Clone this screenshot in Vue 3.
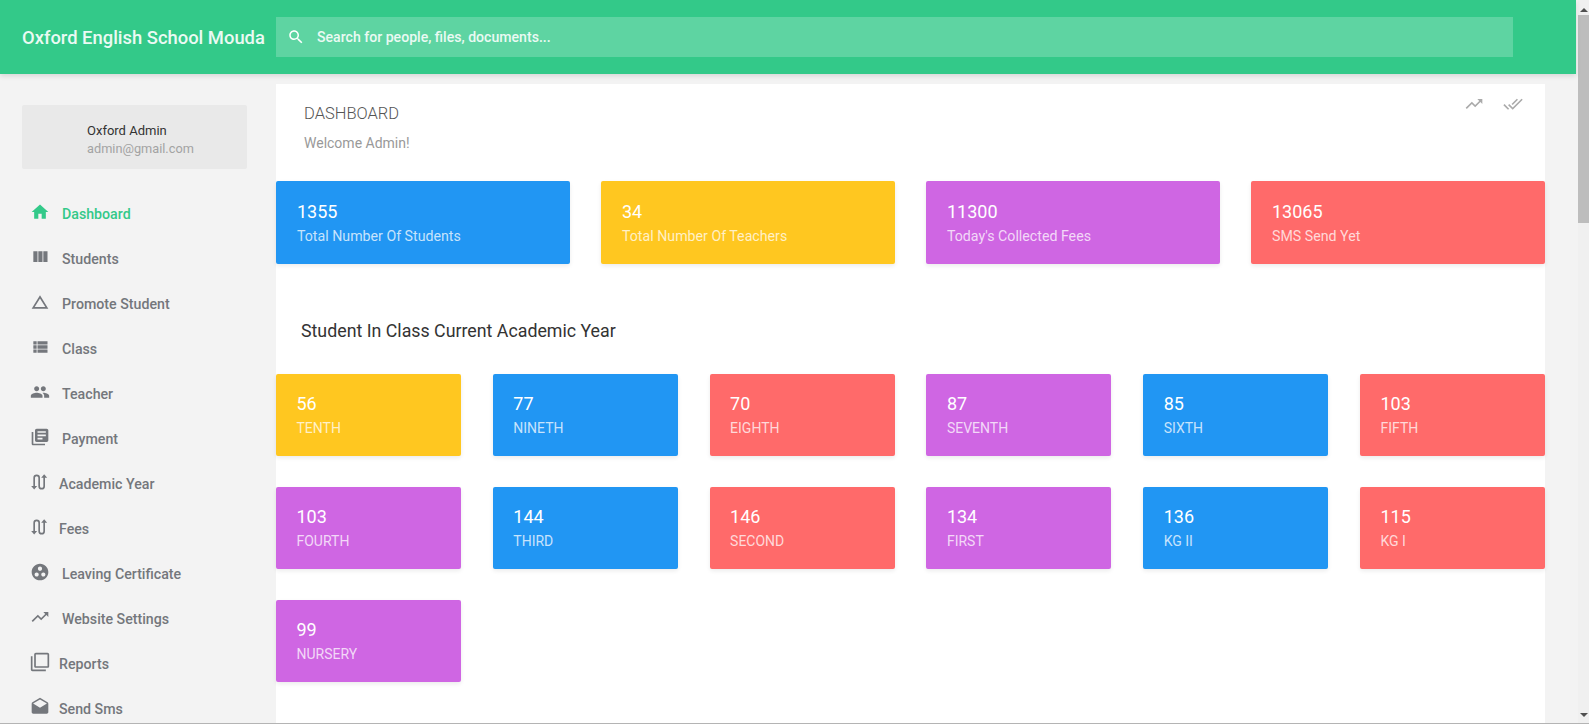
<script setup>
const paths = {
  home: 'M10 20v-6h4v6h5v-8h3L12 3 2 12h3v8z',
  column: 'M10 18h5V5h-5v13zm-6 0h5V5H4v13zM16 5v13h5V5h-5z',
  triangle: 'M12 7.77L18.39 18H5.61L12 7.77M12 4L2 20h20L12 4z',
  list: 'M4 14h4v-4H4v4zm0 5h4v-4H4v4zM4 9h4V5H4v4zm5 5h12v-4H9v4zm0 5h12v-4H9v4zM9 5v4h12V5H9z',
  people: 'M16 11c1.66 0 2.99-1.34 2.99-3S17.66 5 16 5c-1.66 0-3 1.34-3 3s1.34 3 3 3zm-8 0c1.66 0 2.99-1.34 2.99-3S9.66 5 8 5C6.34 5 5 6.34 5 8s1.34 3 3 3zm0 2c-2.33 0-7 1.17-7 3.5V19h14v-2.5c0-2.33-4.67-3.5-7-3.5zm8 0c-.29 0-.62.02-.97.05 1.16.84 1.97 1.97 1.97 3.45V19h6v-2.5c0-2.33-4.67-3.5-7-3.5z',
  books: 'M4 6H2v14c0 1.1.9 2 2 2h14v-2H4V6zm16-4H8c-1.1 0-2 .9-2 2v12c0 1.1.9 2 2 2h12c1.1 0 2-.9 2-2V4c0-1.1-.9-2-2-2zm-1 9H9V9h10v2zm-4 4H9v-2h6v2zm4-8H9V5h10v2z',
  swap: 'M5 21l-3.6-4.2H4V7a4 4 0 0 1 8 0v10a2 2 0 0 0 4 0V7h-2.6L17 2.8 20.6 7H18v10a4 4 0 0 1-8 0V7a2 2 0 0 0-4 0v9.8h2.6z',
  group: 'M12 2C6.48 2 2 6.48 2 12s4.48 10 10 10 10-4.48 10-10S17.52 2 12 2zM8 17.5c-1.38 0-2.5-1.12-2.5-2.5s1.12-2.5 2.5-2.5 2.5 1.12 2.5 2.5-1.12 2.5-2.5 2.5zM9.5 8c0-1.38 1.12-2.5 2.5-2.5s2.5 1.12 2.5 2.5-1.12 2.5-2.5 2.5S9.5 9.38 9.5 8zm6.5 9.5c-1.38 0-2.5-1.12-2.5-2.5s1.12-2.5 2.5-2.5 2.5 1.12 2.5 2.5-1.12 2.5-2.5 2.5z',
  trend: 'M16 6l2.29 2.29-4.88 4.88-4-4L2 16.59 3.41 18l6-6 4 4 6.3-6.29L22 12V6z',
  copy: 'M3 5H1v16c0 1.1.9 2 2 2h16v-2H3V5zm18-4H7c-1.1 0-2 .9-2 2v14c0 1.1.9 2 2 2h14c1.1 0 2-.9 2-2V3c0-1.1-.9-2-2-2zm0 16H7V3h14v14z',
  drafts: 'M21.99 8c0-.72-.37-1.35-.94-1.7L12 1 2.95 6.3C2.38 6.65 2 7.28 2 8v10c0 1.1.9 2 2 2h16c1.1 0 2-.9 2-2l-.01-10zM12 13L3.74 7.84 12 3l8.26 4.84L12 13z',
  doneAll: 'M18 7l-1.41-1.41-6.34 6.34 1.41 1.41L18 7zm4.24-1.41L11.66 16.17 7.48 12l-1.41 1.41L11.66 19l12-12-1.42-1.41zM.41 13.41L6 19l1.41-1.41L1.83 12 .41 13.41z',
  search: 'M15.5 14h-.79l-.28-.27C15.41 12.59 16 11.11 16 9.5 16 5.91 13.09 3 9.5 3S3 5.91 3 9.5 5.91 16 9.5 16c1.61 0 3.09-.59 4.23-1.57l.27.28v.79l5 4.99L20.49 19l-4.99-5zm-6 0C7.01 14 5 11.99 5 9.5S7.01 5 9.5 5 14 7.01 14 9.5 11.99 14 9.5 14z',
};

const menu = [
  { label: 'Dashboard', icon: 'home', active: true },
  { label: 'Students', icon: 'column' },
  { label: 'Promote Student', icon: 'triangle' },
  { label: 'Class', icon: 'list' },
  { label: 'Teacher', icon: 'people' },
  { label: 'Payment', icon: 'books' },
  { label: 'Academic Year', icon: 'swap', tight: true },
  { label: 'Fees', icon: 'swap', tight: true },
  { label: 'Leaving Certificate', icon: 'group' },
  { label: 'Website Settings', icon: 'trend' },
  { label: 'Reports', icon: 'copy', tight: true },
  { label: 'Send Sms', icon: 'drafts', tight: true },
];

const stats = [
  { value: 1355, label: 'Total Number Of Students', color: 'blue' },
  { value: 34, label: 'Total Number Of Teachers', color: 'yellow' },
  { value: 11300, label: "Today's Collected Fees", color: 'purple' },
  { value: 13065, label: 'SMS Send Yet', color: 'red' },
];

const classes = [
  { value: 56, label: 'TENTH', color: 'yellow' },
  { value: 77, label: 'NINETH', color: 'blue' },
  { value: 70, label: 'EIGHTH', color: 'red' },
  { value: 87, label: 'SEVENTH', color: 'purple' },
  { value: 85, label: 'SIXTH', color: 'blue' },
  { value: 103, label: 'FIFTH', color: 'red' },
  { value: 103, label: 'FOURTH', color: 'purple' },
  { value: 144, label: 'THIRD', color: 'blue' },
  { value: 146, label: 'SECOND', color: 'red' },
  { value: 134, label: 'FIRST', color: 'purple' },
  { value: 136, label: 'KG II', color: 'blue' },
  { value: 115, label: 'KG I', color: 'red' },
  { value: 99, label: 'NURSERY', color: 'purple' },
];
</script>

<template>
  <div class="window">
    <div class="page">
      <header class="topbar">
        <div class="brand">Oxford English School Mouda</div>
        <div class="search">
          <svg class="search-icon" viewBox="0 0 24 24"><path :d="paths.search" /></svg>
          <span>Search for people, files, documents...</span>
        </div>
      </header>

      <div class="body">
        <aside class="sidebar">
          <div class="profile">
            <div class="profile-name">Oxford Admin</div>
            <div class="profile-mail">admin@gmail.com</div>
          </div>
          <nav class="menu">
            <a
              v-for="item in menu"
              :key="item.label"
              class="menu-item"
              :class="{ active: item.active, tight: item.tight }"
            >
              <svg class="menu-icon" viewBox="0 0 24 24"><path :d="paths[item.icon]" /></svg>
              <span>{{ item.label }}</span>
            </a>
          </nav>
        </aside>

        <main class="content">
          <div class="page-head">
            <div>
              <h1>DASHBOARD</h1>
              <p>Welcome Admin!</p>
            </div>
            <div class="head-actions">
              <svg viewBox="0 0 24 24"><path :d="paths.trend" /></svg>
              <svg viewBox="0 0 24 24"><path :d="paths.doneAll" /></svg>
            </div>
          </div>

          <section class="stat-grid">
            <div v-for="card in stats" :key="card.label" class="card" :class="card.color">
              <div class="card-value">{{ card.value }}</div>
              <div class="card-label">{{ card.label }}</div>
            </div>
          </section>

          <h2>Student In Class Current Academic Year</h2>

          <section class="class-grid">
            <div v-for="card in classes" :key="card.label" class="card" :class="card.color">
              <div class="card-value">{{ card.value }}</div>
              <div class="card-label">{{ card.label }}</div>
            </div>
          </section>
        </main>
      </div>
    </div>

    <div class="scrollbar">
      <span class="arrow up"></span>
      <div class="thumb"></div>
      <span class="arrow down"></span>
    </div>
  </div>
</template>

<style scoped>
.window {
  display: flex;
  height: 724px;
  box-sizing: border-box;
  overflow: hidden;
  background: #f3f3f3;
  border-bottom: 1px solid #b4b4b4;
  font-family: Roboto, "Liberation Sans", sans-serif;
}

.page {
  flex: 1;
  min-width: 0;
}

.topbar {
  position: relative;
  z-index: 1;
  display: flex;
  align-items: center;
  height: 74px;
  margin-right: 2px;
  background: #33c989;
  box-shadow: 0 2px 5px rgba(0, 0, 0, 0.12);
}

.brand {
  width: 276px;
  flex: none;
  padding-left: 22px;
  box-sizing: border-box;
  color: #eafaf3;
  font-size: 18.4px;
  font-weight: 500;
  white-space: nowrap;
}

.search {
  display: flex;
  align-items: center;
  width: 1237px;
  height: 40px;
  background: #5ed4a2;
  color: #eafaf3;
  font-size: 14.1px;
  font-weight: 500;
}

.search-icon {
  width: 18px;
  height: 18px;
  margin: 0 12px 0 11px;
  fill: #fff;
}

.body {
  display: flex;
  height: 649px;
}

.sidebar {
  width: 276px;
  flex: none;
  padding: 31px 29px 0 22px;
  box-sizing: border-box;
}

.profile {
  height: 64px;
  padding: 17px 0 0 65px;
  box-sizing: border-box;
  background: #e9e9e9;
  border-radius: 2px;
  font-size: 13px;
  line-height: 18px;
}

.profile-name {
  color: #333;
}

.profile-mail {
  color: #a3a3a3;
  font-size: 12.75px;
}

.menu {
  margin-top: 22px;
}

.menu-item {
  display: flex;
  align-items: center;
  height: 45px;
  padding-left: 8px;
  color: #74777c;
  font-size: 14.2px;
  font-weight: 500;
}

.menu-item.active {
  color: #33c989;
}

.menu-item.active .menu-icon {
  fill: #33c989;
}

.menu-icon {
  width: 20px;
  height: 20px;
  flex: none;
  margin: -4px 12px 0 0;
  fill: #74777c;
}

.menu-item.tight .menu-icon {
  margin-right: 9px;
}

.content {
  flex: 1;
  min-width: 0;
  width: 1269px;
  max-width: 1269px;
  margin-top: 10px;
  background: #fff;
}

.page-head {
  display: flex;
  justify-content: space-between;
  height: 97px;
  padding: 20px 22px 0 28px;
  box-sizing: border-box;
}

h1 {
  margin: 0;
  color: #555;
  font-size: 16.5px;
  font-weight: 300;
  line-height: 20px;
}

.page-head p {
  margin: 9px 0 0;
  color: #999;
  font-size: 14px;
  line-height: 20px;
}

.head-actions {
  display: flex;
  gap: 19px;
  margin-top: -10px;
}

.head-actions svg {
  width: 20px;
  height: 20px;
  fill: #aaa;
}

.stat-grid {
  display: grid;
  grid-template-columns: repeat(4, 1fr);
  column-gap: 31px;
}

.class-grid {
  display: grid;
  grid-template-columns: repeat(6, 1fr);
  gap: 31.2px 31.8px;
}

.card {
  height: 82px;
  padding: 20px 20.5px 0;
  box-sizing: border-box;
  border-radius: 2px;
  box-shadow: 0 2px 4px rgba(0, 0, 0, 0.08);
}

.stat-grid .card {
  height: 83px;
  padding: 21px 21px 0;
}

.stat-grid .card-label {
  font-size: 14.2px;
}

.card-value {
  color: #fff;
  font-size: 18px;
  font-weight: 400;
  line-height: 20px;
}

.card-label {
  margin-top: 4px;
  color: rgba(255, 255, 255, 0.75);
  font-size: 14px;
  line-height: 20px;
}

.blue {
  background: #2196f3;
}

.yellow {
  background: #ffc720;
}

.purple {
  background: #cf66e3;
}

.red {
  background: #ff6a6a;
}

h2 {
  margin: 0;
  padding: 57px 0 33px 25px;
  color: #333;
  font-size: 17.8px;
  font-weight: 400;
  line-height: 20px;
}

.scrollbar {
  display: flex;
  flex-direction: column;
  width: 11px;
  flex: none;
  background: #f0f0f0;
}

.thumb {
  height: 208px;
  margin-top: 3px;
  background: #bdbdbd;
}

.arrow {
  width: 0;
  height: 0;
  margin: 0 auto;
  border-left: 4px solid transparent;
  border-right: 4px solid transparent;
}

.arrow.up {
  margin-top: 8px;
  border-bottom: 4px solid #505050;
}

.arrow.down {
  margin-top: auto;
  margin-bottom: 6px;
  border-top: 4px solid #505050;
}
</style>

<style>
html,
body {
  overflow: hidden;
}
</style>
